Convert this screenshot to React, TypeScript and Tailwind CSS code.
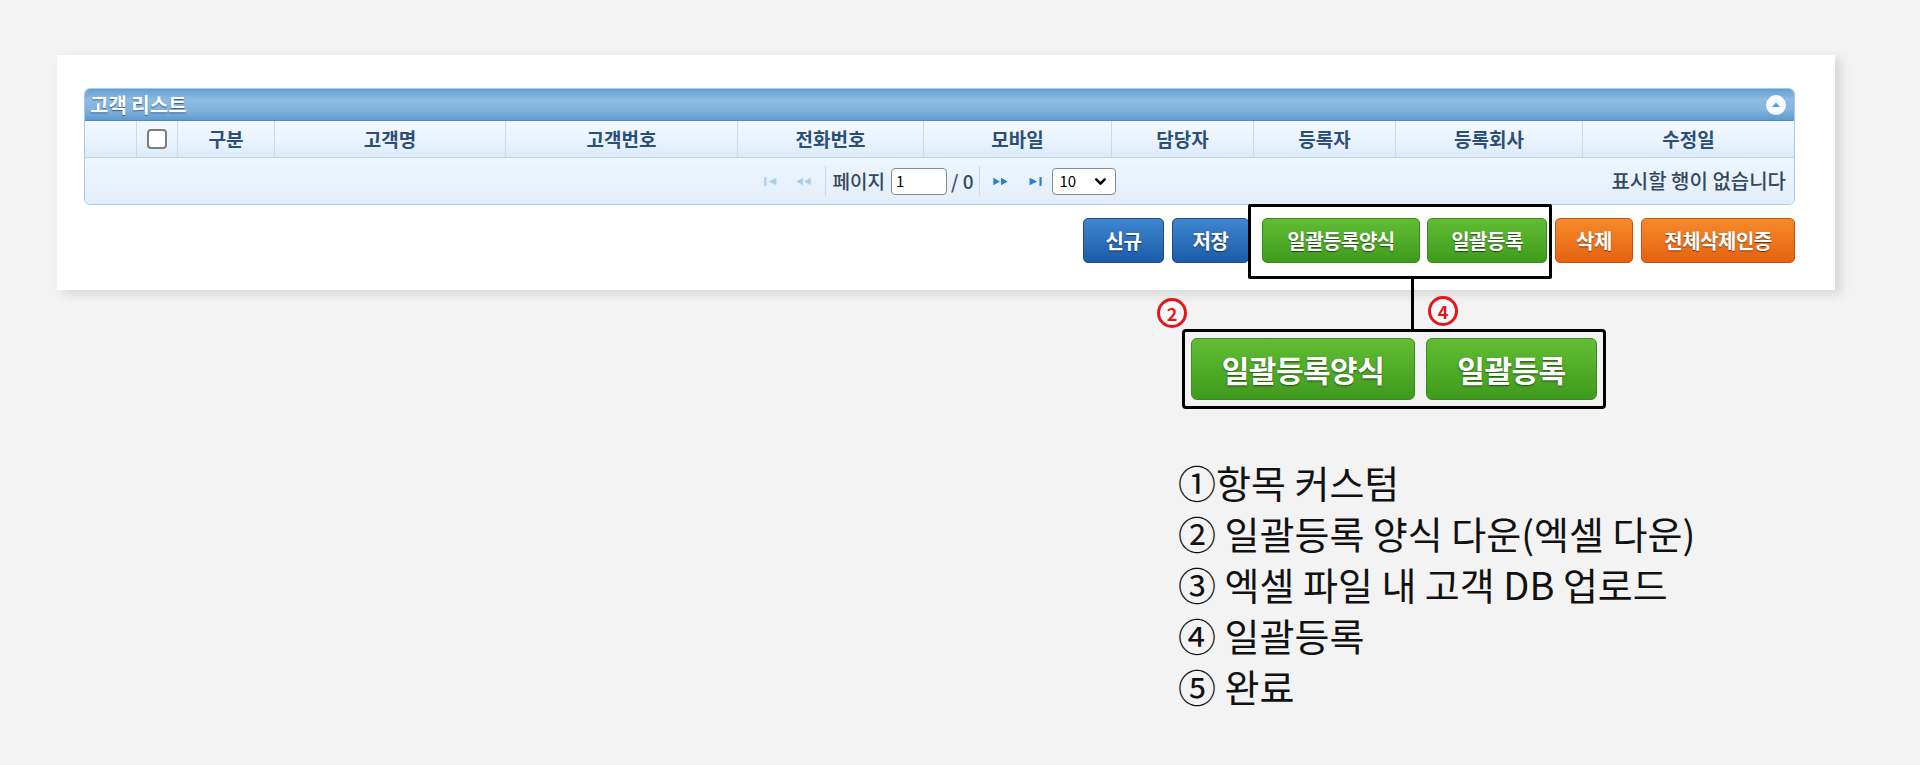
import { ChevronDown } from "lucide-react";

const columns = [
  { label: "", w: 52 },
  { label: "check", w: 41 },
  { label: "구분", w: 97 },
  { label: "고객명", w: 231 },
  { label: "고객번호", w: 232 },
  { label: "전화번호", w: 186 },
  { label: "모바일", w: 188 },
  { label: "담당자", w: 142 },
  { label: "등록자", w: 142 },
  { label: "등록회사", w: 187 },
  { label: "수정일", w: 211 },
];

const steps = [
  "①항목 커스텀",
  "② 일괄등록 양식 다운(엑셀 다운)",
  "③ 엑셀 파일 내 고객 DB 업로드",
  "④ 일괄등록",
  "⑤ 완료",
];

const font = "font-['Noto_Sans_CJK_KR','Noto_Sans',sans-serif]";

function SmallButton({ label, color, width }: { label: string; color: "blue" | "green" | "orange"; width: string }) {
  const tone = {
    blue: "bg-linear-to-b from-[#3f86cf] to-[#1b5ba8] border-[#1a4c86]",
    green: "bg-linear-to-b from-[#62bd33] to-[#3f9b1d] border-[#3a8a1c]",
    orange: "bg-linear-to-b from-[#f68a2c] to-[#e6620c] border-[#c2530d]",
  }[color];
  return (
    <button
      className={`${width} h-[45px] rounded-[5px] border ${tone} text-white text-[20px] font-bold [text-shadow:0_1px_1px_rgba(0,0,0,0.55)] flex items-center justify-center tracking-[-0.5px]`}
    >
      {label}
    </button>
  );
}

function PagerIcon({ kind, on }: { kind: "first" | "prev" | "next" | "last"; on: boolean }) {
  const c = on ? "#2a7fd4" : "#a9cdeb";
  return (
    <svg width="19" height="11" viewBox="0 0 17 10" fill={c}>
      {kind === "first" && (
        <>
          <rect x="1" y="1" width="2" height="8" />
          <path d="M12 1.5 L5 5 L12 8.5Z" />
        </>
      )}
      {kind === "prev" && (
        <>
          <path d="M8 1.5 L2 5 L8 8.5Z" />
          <path d="M15 1.5 L9 5 L15 8.5Z" />
        </>
      )}
      {kind === "next" && (
        <>
          <path d="M2 1.5 L8 5 L2 8.5Z" />
          <path d="M9 1.5 L15 5 L9 8.5Z" />
        </>
      )}
      {kind === "last" && (
        <>
          <path d="M4 1.5 L11 5 L4 8.5Z" />
          <rect x="13" y="1" width="2" height="8" />
        </>
      )}
    </svg>
  );
}

function Circled({ n }: { n: string }) {
  return (
    <div className="w-[30px] h-[30px] rounded-full border-[3px] border-[#e8141b] bg-white/60 flex items-center justify-center text-[#e8141b] text-[18px] font-bold leading-none">
      {n}
    </div>
  );
}

export default function App() {
  return (
    <div className={`w-[1920px] h-[765px] bg-[#f3f3f3] ${font} overflow-hidden`}>
      <div className="pt-[55px] pl-[57px]">
        {/* Card */}
        <div className="relative w-[1778px] bg-white shadow-[6px_4px_10px_rgba(0,0,0,0.12)] pt-[33px] pl-[27px] pr-[40px] pb-[27px]">
          {/* Grid panel */}
          <div className="border border-[#a9c9e6] rounded-[6px] overflow-hidden">
            <div className="h-[32px] bg-[linear-gradient(to_bottom,#64a0d4_0%,#8dbbe1_35%,#80b2dc_70%,#5e9ad0_100%)] border-b border-[#4f8cc6] flex items-center justify-between px-[5px]">
              <span className="text-white text-[20px] font-bold [text-shadow:0_1px_1px_rgba(30,70,120,0.8)] leading-none">
                고객 리스트
              </span>
              <div className="w-[20px] h-[20px] rounded-full bg-white/95 flex items-center justify-center mr-[3px]">
                <svg width="10" height="7" viewBox="0 0 10 7">
                  <path d="M1 6 L5 1.5 L9 6Z" fill="#5f9bd1" />
                </svg>
              </div>
            </div>

            <div className="grid grid-cols-[52px_41px_97px_231px_232px_186px_188px_142px_142px_187px_211px] h-[37px] bg-linear-to-b from-[#f4f9fe] via-[#eaf4fd] to-[#dcebf8] border-b border-[#bcd4ec]">
              {columns.map((col, i) => (
                <div
                  key={i}
                  className={`flex items-center justify-center text-[19px] font-bold text-[#2b4f78] ${
                    i < columns.length - 1 ? "border-r border-[#c8dcef]" : ""
                  }`}
                >
                  {col.label === "check" ? (
                    <div className="w-[20px] h-[20px] border-2 border-[#7d7d7d] rounded-[4px] bg-white" />
                  ) : (
                    col.label
                  )}
                </div>
              ))}
            </div>

            <div className="grid grid-cols-[1fr_auto_1fr] items-center h-[46px] bg-linear-to-b from-[#eef6fe] to-[#e2eefa]">
              <div />
              <div className="flex items-center text-[19px] text-[#34495f]">
                <PagerIcon kind="first" on={false} />
                <div className="ml-[12px]">
                  <PagerIcon kind="prev" on={false} />
                </div>
                <div className="ml-[12px] w-px h-[30px] bg-[#c6d9ec]" />
                <span className="ml-[7px] font-medium">페이지</span>
                <div className="ml-[6px] w-[56px] h-[27px] border-[1.5px] border-[#8a8a8a] rounded-[4px] bg-white flex items-center pl-[4px] text-[15px] text-black">
                  1
                </div>
                <span className="ml-[4px] font-medium">/ 0</span>
                <div className="ml-[6px] w-px h-[30px] bg-[#c6d9ec]" />
                <div className="ml-[11px]">
                  <PagerIcon kind="next" on />
                </div>
                <div className="ml-[15px]">
                  <PagerIcon kind="last" on />
                </div>
                <div className="ml-[8px] w-[64px] h-[27px] border-[1.5px] border-[#8a8a8a] rounded-[4px] bg-white flex items-center justify-between pl-[6px] pr-[6px] text-[15px] text-black">
                  10
                  <ChevronDown size={17} strokeWidth={3.5} color="#000" />
                </div>
              </div>
              <div className="justify-self-end pr-[8px] text-[20px] text-[#34495f] font-medium">표시할 행이 없습니다</div>
            </div>
          </div>

          {/* Buttons */}
          <div className="mt-[13px] flex justify-end gap-[8px]">
            <SmallButton label="신규" color="blue" width="w-[81px]" />
            <SmallButton label="저장" color="blue" width="w-[77px]" />
            <div className="relative ml-[5px] flex gap-[7px]">
              <SmallButton label="일괄등록양식" color="green" width="w-[158px]" />
              <SmallButton label="일괄등록" color="green" width="w-[120px]" />
              <div className="absolute -left-[14px] -right-[5px] -top-[14px] -bottom-[16px] border-[3px] border-black rounded-[2px] pointer-events-none" />
              <div className="absolute left-[149px] top-[calc(100%+16px)] w-[3px] h-[51px] bg-black" />
            </div>
            <SmallButton label="삭제" color="orange" width="w-[78px]" />
            <SmallButton label="전체삭제인증" color="orange" width="w-[154px]" />
          </div>
        </div>
      </div>

      {/* Callout */}
      <div className="pl-[1182px] mt-[39px]">
        <div className="relative w-[424px] border-[3px] border-black rounded-[4px] p-[6px] flex gap-[11px]">
          <button className="w-[224px] h-[62px] rounded-[6px] border border-[#3a8a1c] bg-linear-to-b from-[#62bd33] to-[#3f9b1d] text-white text-[30px] font-bold tracking-[-0.5px] [text-shadow:0_1px_2px_rgba(0,0,0,0.55)]">
            일괄등록양식
          </button>
          <button className="w-[171px] h-[62px] rounded-[6px] border border-[#3a8a1c] bg-linear-to-b from-[#62bd33] to-[#3f9b1d] text-white text-[30px] font-bold tracking-[-0.5px] [text-shadow:0_1px_2px_rgba(0,0,0,0.55)]">
            일괄등록
          </button>
          <div className="absolute -left-[28px] -top-[34px]">
            <Circled n="2" />
          </div>
          <div className="absolute left-[243px] -top-[36px]">
            <Circled n="4" />
          </div>
        </div>
      </div>

      {/* Steps */}
      <div className="pl-[1178px] mt-[47px] text-[38px] leading-[51px] text-[#111]">
        {steps.map((s) => (
          <div key={s}>{s}</div>
        ))}
      </div>
    </div>
  );
}
